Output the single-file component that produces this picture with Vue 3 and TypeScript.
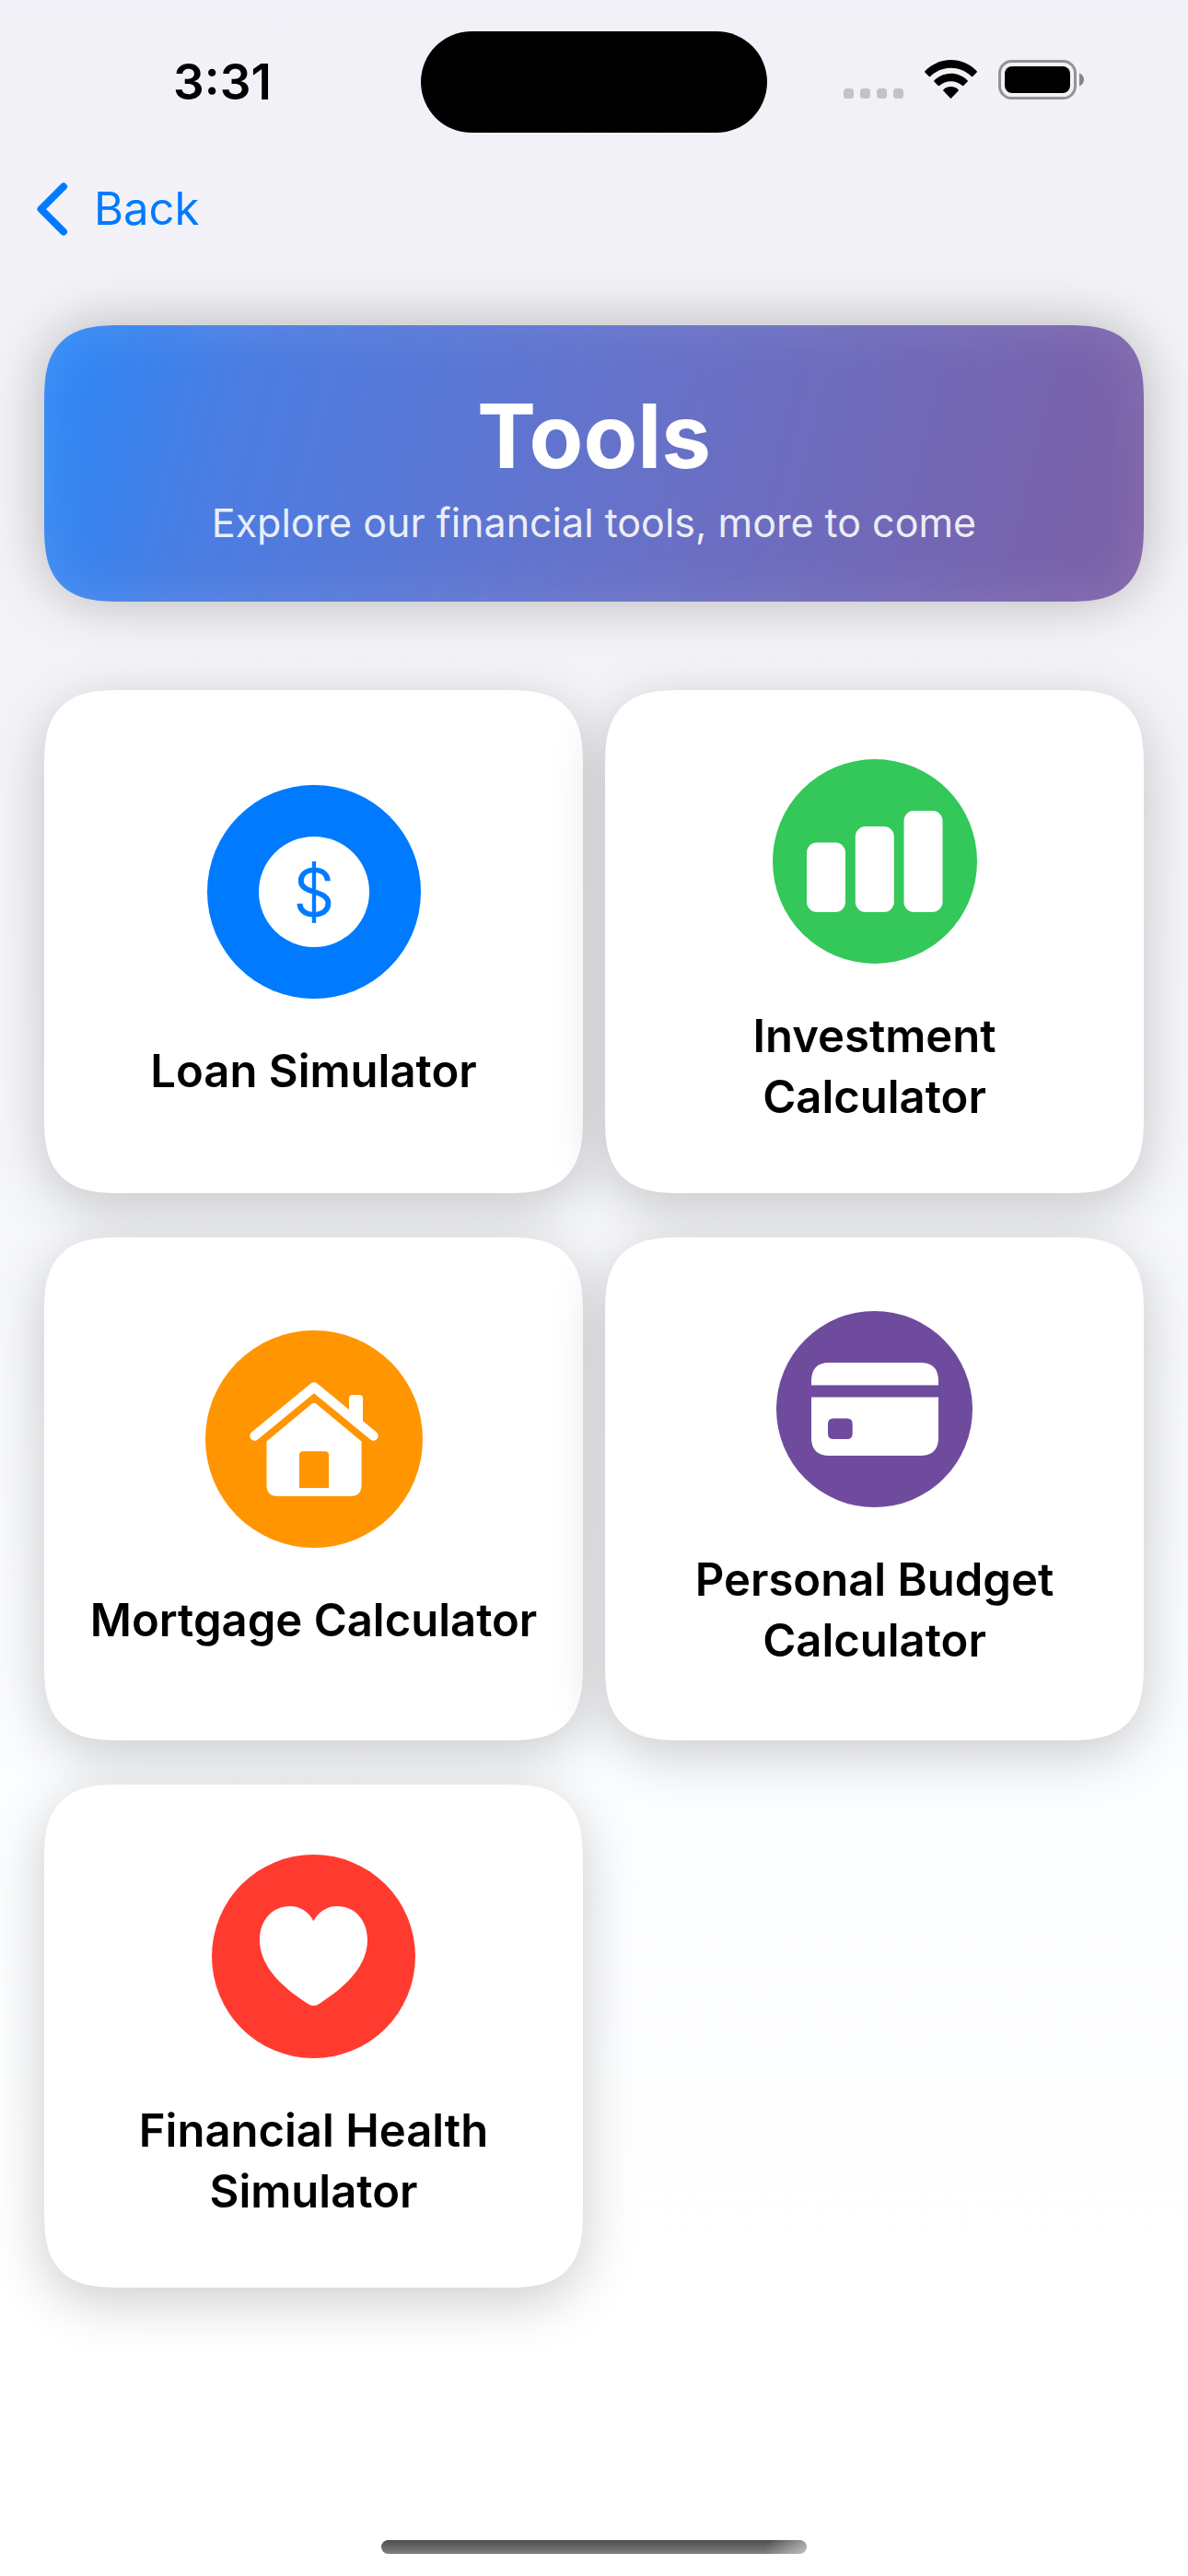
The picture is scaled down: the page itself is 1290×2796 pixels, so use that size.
<script setup lang="ts">
type IconName = 'dollar' | 'bars' | 'house' | 'card' | 'heart'

interface Tool {
  title: string
  icon: IconName
  size: number
  color: string
}

const tools: Tool[] = [
  { title: 'Loan Simulator', icon: 'dollar', size: 232, color: '#007aff' },
  { title: 'Investment Calculator', icon: 'bars', size: 222, color: '#34c759' },
  { title: 'Mortgage Calculator', icon: 'house', size: 236, color: '#ff9500' },
  { title: 'Personal Budget Calculator', icon: 'card', size: 213, color: '#6f4b9e' },
  { title: 'Financial Health Simulator', icon: 'heart', size: 221, color: '#ff3b30' },
]
</script>

<template>
  <div class="screen">
    <div class="status">
      <span class="time">3:31</span>
      <span class="island"></span>
      <div class="indicators">
        <svg width="65" height="43" viewBox="0 0 65 43" fill="#c3c2c8" aria-hidden="true">
          <rect v-for="n in 4" :key="n" :x="(n - 1) * 18" y="31" width="11" height="11" rx="3.5" />
        </svg>
        <svg width="57" height="43" viewBox="0 0 57 43" aria-hidden="true">
          <path d="M0.3 12.2 C16 -4 41 -4 56.7 12.2 Q57.2 12.8 56.7 13.4 L52.2 18 Q51.6 18.5 51 18 C38 5.8 19 5.8 6 18 Q5.4 18.5 4.8 18 L0.3 13.4 Q-0.2 12.8 0.3 12.2Z" />
          <path d="M10.3 22.4 C20.5 12.2 36.5 12.2 46.7 22.4 Q47.2 23 46.7 23.6 L42.2 28 Q41.6 28.5 41 28 C34 21.6 23 21.6 16 28 Q15.4 28.5 14.8 28 L10.3 23.6 Q9.8 23 10.3 22.4Z" />
          <path d="M20.3 32.4 C25 28 32 28 36.7 32.4 Q37.2 33 36.7 33.6 L29.1 41.4 Q28.5 42 27.9 41.4 L20.3 33.6 Q19.8 33 20.3 32.4Z" />
        </svg>
        <svg width="93" height="43" viewBox="0 0 93 43" aria-hidden="true">
          <rect x="1.5" y="1.5" width="82" height="40" rx="13" fill="none" stroke="#939297" stroke-width="3" />
          <rect x="7" y="7" width="71" height="29" rx="8" />
          <path d="M88 14.6 C91.5 16 93 18.6 93 21.5 C93 24.4 91.5 27 88 28.4Z" fill="#86858a" />
        </svg>
      </div>
    </div>

    <nav class="nav">
      <button class="back" type="button">
        <svg width="34" height="58" viewBox="0 0 34 58" fill="none" aria-hidden="true">
          <path d="M29 4.5 L4.5 29 L29 53.5" stroke="#007aff" stroke-width="8" stroke-linecap="round" stroke-linejoin="round" />
        </svg>
        <span>Back</span>
      </button>
    </nav>

    <main class="content">
      <header class="hero">
        <h1>Tools</h1>
        <p>Explore our financial tools, more to come</p>
      </header>

      <div class="grid">
        <button v-for="tool in tools" :key="tool.title" class="tile" type="button">
          <svg
            :width="tool.size"
            :height="tool.size"
            :viewBox="`0 0 ${tool.size} ${tool.size}`"
            fill="#fff"
            aria-hidden="true"
          >
            <circle :cx="tool.size / 2" :cy="tool.size / 2" :r="tool.size / 2" :fill="tool.color" />
            <template v-if="tool.icon === 'dollar'">
              <circle cx="116" cy="116" r="60" />
              <text class="dollar" x="116" y="142" text-anchor="middle">$</text>
            </template>
            <template v-else-if="tool.icon === 'bars'">
              <rect x="37" y="90.5" width="42" height="75.5" rx="11" />
              <rect x="89.8" y="73" width="42" height="93" rx="11" />
              <rect x="142.5" y="56" width="42" height="110" rx="11" />
            </template>
            <template v-else-if="tool.icon === 'house'">
              <path d="M53.5 114.5 L118 61.5 L182.500 114.5" fill="none" stroke="#fff" stroke-width="10.4" stroke-linecap="round" stroke-linejoin="round" />
              <path d="M156 94 V74 Q156 70 160 70 H167 Q171 70 171 74 V106Z" />
              <path
                fill-rule="evenodd"
                d="M66.5 120.6 L114.6 80.4 Q118 77.6 121.4 80.4 L169.5 120.6 V168 Q169.5 180 157.5 180 H78.5 Q66.5 180 66.5 168Z M102 171 H134 V135.3 Q134 131.3 130 131.3 H106 Q102 131.3 102 135.3Z"
              />
            </template>
            <template v-else-if="tool.icon === 'card'">
              <path d="M38 80.6 V76 Q38 56 57.5 56 H156.5 Q176 56 176 76 V80.6Z" />
              <path
                fill-rule="evenodd"
                d="M38 93.6 H176 V137.5 Q176 157 156.5 157 H57.5 Q38 157 38 137.5Z M62 116.6 Q56 116.6 56 122.6 V133 Q56 139 62 139 H76.7 Q82.7 139 82.7 133 V122.6 Q82.7 116.6 76.7 116.6Z"
              />
            </template>
            <path
              v-else
              d="M110.5 72.2 C105 62 96 56.1 84.8 56.1 C66 56.1 52 71 52 92.5 C52 119 72 141 104 161.7 Q110.5 166.2 117 161.7 C149 141 169 119 169 92.5 C169 71 155 56.1 136.2 56.1 C125 56.1 116 62 110.5 72.2Z"
            />
          </svg>
          <span class="label">{{ tool.title }}</span>
        </button>
      </div>
    </main>

    <div class="home"></div>
  </div>
</template>

<style>
body {
  margin: 0;
}
</style>

<style scoped>
.screen {
  box-sizing: border-box;
  min-height: 100vh;
  display: flex;
  flex-direction: column;
  padding: 34px 0 24px;
  background: linear-gradient(#f2f1f7 0%, #f3f3f8 26%, #f6f7fa 46%, #fbfdff 70%, #ffffff 90%);
  color: #000;
  font-family: Inter, 'Liberation Sans', sans-serif;
}

.status {
  display: grid;
  grid-template-columns: 1fr auto 1fr;
  align-items: center;
}

.time {
  padding-left: 26px;
  text-align: center;
  font-size: 53px;
  font-weight: 600;
  line-height: 60px;
}

.island {
  width: 376px;
  height: 110px;
  border-radius: 55px;
  background: #000;
}

.indicators {
  display: flex;
  justify-content: center;
  gap: 23px;
  padding: 0 30px 5px 0;
}

.nav {
  display: flex;
  align-items: center;
  height: 166px;
  padding: 0 40px;
}

.back {
  display: flex;
  align-items: center;
  gap: 28px;
  padding: 0;
  border: 0;
  background: none;
  color: #007aff;
  font: 400 49px/60px Inter, 'Liberation Sans', sans-serif;
}

.content {
  display: flex;
  flex-direction: column;
  gap: 96px;
  padding: 43px 48px 0;
}

.hero {
  display: flex;
  flex-direction: column;
  align-items: center;
  gap: 8px;
  padding: 60px 48px;
  border-radius: 66px;
  background: linear-gradient(104deg, #2a88f8 0%, #4b7de2 18%, #6672ca 52%, #7c5fa5 100%);
  box-shadow:
    0 0 60px rgba(0, 0, 0, 0.25),
    inset 0 0 60px rgba(255, 255, 255, 0.12);
  color: #fff;
  text-align: center;
}

.hero h1 {
  margin: 0;
  font-size: 96px;
  font-weight: 700;
  line-height: 120px;
}

.hero p {
  margin: 0;
  color: rgba(255, 255, 255, 0.9);
  font-size: 43px;
  line-height: 52px;
}

.grid {
  display: grid;
  grid-template-columns: 1fr 1fr;
  gap: 48px 24px;
}

.tile {
  display: flex;
  flex-direction: column;
  align-items: center;
  justify-content: center;
  gap: 46px;
  height: 546px;
  padding: 4px 40px 0;
  border: 0;
  border-radius: 66px;
  background: #fff;
  box-shadow: 0 15px 60px rgba(0, 0, 0, 0.2);
  color: #000;
  font: 600 49px/66px Inter, 'Liberation Sans', sans-serif;
}

/* Continuous corners where the browser can draw them */
@supports (corner-shape: superellipse(1.5)) {
  .hero,
  .tile {
    border-radius: 84px;
    corner-shape: superellipse(1.5);
  }
}

.tile svg {
  flex: none;
}

.dollar {
  fill: #007aff;
  stroke: #007aff;
  stroke-width: 1px;
  stroke-linejoin: round;
  font-size: 71px;
  font-weight: 300;
}

.home {
  align-self: center;
  width: 462px;
  height: 15px;
  margin-top: auto;
  border-radius: 8px;
  background:
    linear-gradient(110deg, transparent 90%, rgba(255, 255, 255, 0.5) 100%),
    linear-gradient(#4c4d4c, #808080);
}
</style>
